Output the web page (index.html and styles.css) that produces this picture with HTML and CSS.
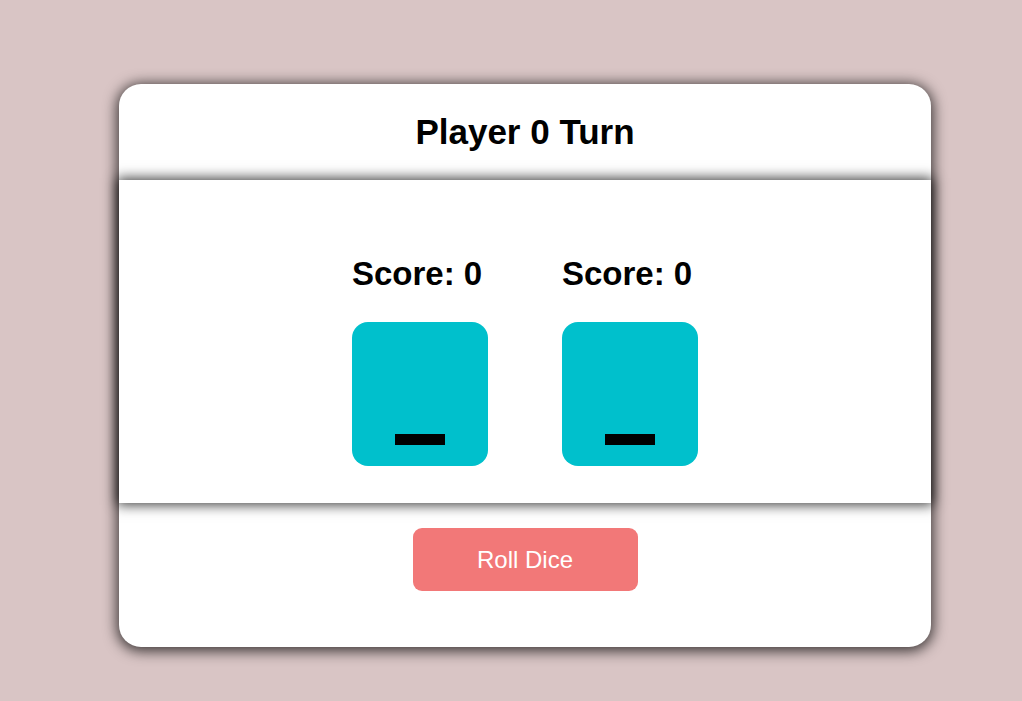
FILE: index.html
```html
<!DOCTYPE html>
<html>
<head>
<meta charset="utf-8">
<link rel="stylesheet" href="styles.css">
</head>
<body>
<div class="card">
  <div class="header">
    <h1 class="title">Player 0 Turn</h1>
  </div>
  <div class="board">
    <div class="player">
      <h2 class="score">Score: 0</h2>
      <div class="die"><span class="pip"></span></div>
    </div>
    <div class="player">
      <h2 class="score">Score: 0</h2>
      <div class="die"><span class="pip"></span></div>
    </div>
  </div>
  <div class="footer">
    <button class="roll">Roll Dice</button>
  </div>
</div>
</body>
</html>
```

FILE: styles.css
```css
html, body {
  margin: 0;
  padding: 0;
  background: #d9c5c5;
  font-family: "Liberation Sans", Arial, sans-serif;
}

body {
  min-height: 701px;
  padding-top: 84px;
  box-sizing: border-box;
}

.card {
  box-sizing: border-box;
  width: 812px;
  height: 563px;
  margin: 0 0 0 119px;
  background: #ffffff;
  border-radius: 22px;
  box-shadow: 0 2px 14px 2px rgba(0, 0, 0, 0.75);
  display: flex;
  flex-direction: column;
}

.header {
  height: 96px;
  display: flex;
  align-items: center;
  justify-content: center;
}

.title {
  margin: 0;
  font-size: 35px;
  line-height: 32px;
  font-weight: bold;
  color: #000;
}

.board {
  box-sizing: border-box;
  height: 323px;
  padding: 78px 0 37px;
  background: #fff;
  box-shadow: 0 0 12px 2px rgba(0, 0, 0, 0.75);
  display: flex;
  justify-content: center;
  gap: 74px;
  position: relative;
}

.player {
  width: 136px;
  display: flex;
  flex-direction: column;
  gap: 32px;
}

.score {
  margin: 0;
  font-size: 33px;
  line-height: 32px;
  font-weight: bold;
  color: #000;
  white-space: nowrap;
}

.die {
  box-sizing: border-box;
  width: 136px;
  height: 144px;
  background: #00c0cc;
  border-radius: 16px;
  display: flex;
  align-items: flex-end;
  justify-content: center;
  padding-bottom: 21px;
}

.pip {
  display: block;
  width: 50px;
  height: 11px;
  background: #000;
}

.footer {
  flex: 1;
  display: flex;
  justify-content: center;
  padding-top: 25px;
}

.roll {
  width: 225px;
  height: 63px;
  border: none;
  border-radius: 9px;
  background: #f27878;
  color: #fff;
  font-family: "Liberation Sans", Arial, sans-serif;
  font-size: 24px;
  padding: 0;
}
```
